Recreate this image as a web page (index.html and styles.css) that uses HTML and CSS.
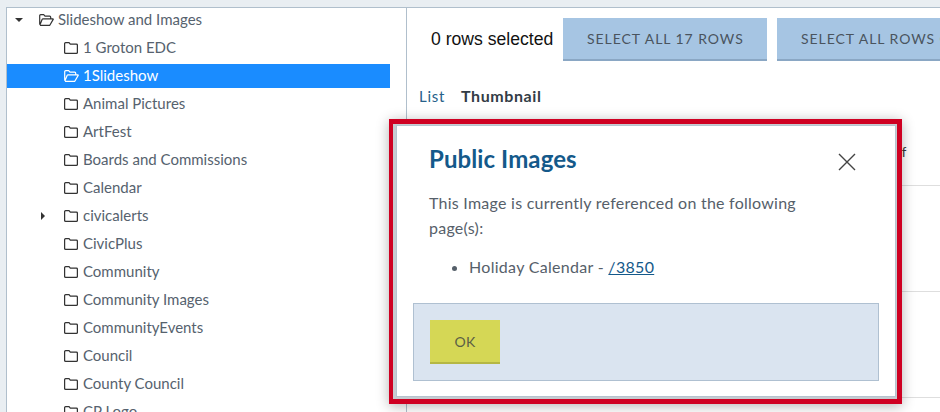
FILE: index.html
```html
<!DOCTYPE html>
<html lang="en">
<head>
<meta charset="utf-8">
<title>Public Images</title>
<link rel="stylesheet" href="styles.css">
</head>
<body>
<svg class="defs" width="0" height="0" aria-hidden="true">
  <symbol id="folder" viewBox="0 0 14 12"><path d="M1.6 .7H5L6.3 2.2H12.4A1 1 0 0 1 13.4 3.2V10.3A1 1 0 0 1 12.4 11.3H1.6A1 1 0 0 1 .6 10.3V1.7A1 1 0 0 1 1.6 .7Z" fill="none" stroke="currentColor" stroke-width="1.25"/></symbol>
  <symbol id="folder-open" viewBox="0 0 15 12"><path d="M.7 10.6V1.7A1 1 0 0 1 1.7 .7H4.7L6 2.2H10.7A1 1 0 0 1 11.7 3.2V4.8M.9 11.3H10.8L14.2 5.4A.4.4 0 0 0 13.9 4.8H4A1 1 0 0 0 3.2 5.3L.9 10.9" fill="none" stroke="currentColor" stroke-width="1.2" stroke-linejoin="round"/></symbol>
</svg>
<div class="shell">
  <aside class="tree">
    <div class="row root"><span class="caret caret-down"></span><svg class="ico-open"><use href="#folder-open"/></svg><span class="label">Slideshow and Images</span></div>
    <div class="row"><svg class="ico"><use href="#folder"/></svg><span class="label">1 Groton EDC</span></div>
    <div class="row selected"><svg class="ico-open"><use href="#folder-open"/></svg><span class="label">1Slideshow</span></div>
    <div class="row"><svg class="ico"><use href="#folder"/></svg><span class="label">Animal Pictures</span></div>
    <div class="row"><svg class="ico"><use href="#folder"/></svg><span class="label">ArtFest</span></div>
    <div class="row"><svg class="ico"><use href="#folder"/></svg><span class="label">Boards and Commissions</span></div>
    <div class="row"><svg class="ico"><use href="#folder"/></svg><span class="label">Calendar</span></div>
    <div class="row has-caret"><span class="caret caret-right"></span><svg class="ico"><use href="#folder"/></svg><span class="label">civicalerts</span></div>
    <div class="row"><svg class="ico"><use href="#folder"/></svg><span class="label">CivicPlus</span></div>
    <div class="row"><svg class="ico"><use href="#folder"/></svg><span class="label">Community</span></div>
    <div class="row"><svg class="ico"><use href="#folder"/></svg><span class="label">Community Images</span></div>
    <div class="row"><svg class="ico"><use href="#folder"/></svg><span class="label">CommunityEvents</span></div>
    <div class="row"><svg class="ico"><use href="#folder"/></svg><span class="label">Council</span></div>
    <div class="row"><svg class="ico"><use href="#folder"/></svg><span class="label">County Council</span></div>
    <div class="row"><svg class="ico"><use href="#folder"/></svg><span class="label">CP Logo</span></div>
  </aside>
  <main class="content">
    <div class="toolbar">
      <span class="count">0 rows selected</span>
      <button class="btn-blue">Select all 17 rows</button>
      <button class="btn-blue">Select all rows on page</button>
    </div>
    <div class="views"><span class="view-link">List</span><strong>Thumbnail</strong></div>
    <div class="grid-row first"><span class="cut">ef</span></div>
    <div class="grid-row"></div>
    <div class="grid-row"></div>
  </main>
</div>
<div class="annotation">
  <section class="modal">
    <header class="modal-head">
      <h2>Public Images</h2>
      <svg class="close" viewBox="0 0 18 18"><path d="M1 1L17 17M17 1L1 17" stroke="currentColor" stroke-width="1.4" fill="none"/></svg>
    </header>
    <p>This Image is currently referenced on the following page(s):</p>
    <ul><li>Holiday Calendar - <a href="#">/3850</a></li></ul>
    <footer class="modal-foot"><button class="btn-ok">OK</button></footer>
  </section>
</div>
</body>
</html>
```
FILE: styles.css
```css
* { box-sizing: border-box; }
html, body { margin: 0; height: 100%; overflow: hidden; }
body {
  background: #e9eef2;
  padding: 7px 0 0 6px;
  font-family: "Lato", "Open Sans", sans-serif;
  font-size: 15px;
  color: #3f4a55;
  position: relative;
}
.defs { position: absolute; }
.shell {
  display: flex;
  height: 440px;
  background: #fff;
  border-top: 1px solid #b0bfcc;
  border-left: 1px solid #b0bfcc;
}
.tree { width: 400px; flex: none; border-right: 1px solid #b0bfcc; padding: 0 16px 0 0; overflow: hidden; }
.row {
  height: 24px;
  margin: 0 0 4px;
  padding-left: 57px;
  display: flex;
  align-items: center;
  white-space: nowrap;
  color: #56626e;
}
.label { margin-top: -2px; }
.root { padding-left: 0; }
.root .caret { margin: 0 0 0 8px; }
.root .ico-open { margin-left: 16px; }
.has-caret { padding-left: 34px; }
.has-caret .ico { margin-left: 19px; }
.selected { background: #1a8cff; color: #fff; }
.ico { width: 14px; height: 12px; margin-right: 5px; color: #333; flex: none; }
.ico-open { width: 15px; height: 12px; margin-right: 4px; color: #333; flex: none; }
.selected .ico-open { color: #fff; }
.caret { width: 0; height: 0; flex: none; }
.caret-down { border: 4px solid transparent; border-top: 4px solid #333; border-bottom: 0; width: 8px; }
.caret-right { border: 4px solid transparent; border-left: 4px solid #333; border-right: 0; }
.content { flex: 1; min-width: 0; overflow: hidden; }
.toolbar { display: flex; align-items: center; gap: 10px; padding: 10px 0 0 24px; white-space: nowrap; }
.count { font: 17.6px "Liberation Sans", sans-serif; color: #111; width: 122px; }
button { font-family: inherit; border: 0; cursor: pointer; }
.btn-blue {
  flex: none;
  height: 43px;
  padding: 0 24px;
  background: #a6c5e3;
  border-bottom: 2px solid #8aa7c4;
  color: #4a545e;
  font-size: 14px;
  letter-spacing: .95px;
  text-transform: uppercase;
}
.btn-blue:first-of-type { width: 204px; }
.views { display: flex; gap: 16px; padding: 25px 0 0 12px; line-height: 20px; }
.view-link { color: #27618a; letter-spacing: .7px; }
.views strong { color: #333c46; font-size: 16px; letter-spacing: .6px; }
.grid-row { height: 106px; border-bottom: 1px solid #dedede; }
.first { height: 80px; position: relative; }
.cut { position: absolute; left: 488px; top: 38px; font-size: 13px; color: #333; }
.annotation {
  position: absolute;
  left: 389px;
  top: 119px;
  width: 513px;
  height: 285px;
  border: 5px solid #cf0022;
  border-left-width: 4px;
  box-shadow: 0 2px 12px rgba(0,0,0,.3);
  background: #c6cbd0;
  padding: 1px 1px 2px 3px;
}
.modal { height: 100%; background: #fff; border: 1px solid #b6c3cf; padding: 0 16px 16px; color: #56606a; }
.modal-head { display: flex; justify-content: space-between; align-items: center; padding: 16px 17px 0 16px; height: 49px; }
h2 { margin: 0; font-size: 24px; font-weight: 700; color: #14598a; letter-spacing: .1px; }
.close { width: 18px; height: 18px; color: #444; margin: 6px 6px 0 0; }
p { margin: 15px 60px 0 16px; line-height: 25px; font-size: 16px; letter-spacing: .25px; }
ul { margin: 15px 0 0; padding: 0 0 0 56px; font-size: 16px; letter-spacing: .3px; line-height: 24px; }
a { color: #14598a; }
.modal-foot { margin-top: 24px; height: 78px; background: #dae4f0; border: 1px solid #afc0d1; padding: 16px; }
.btn-ok {
  display: block;
  width: 70px;
  height: 44px;
  background: #d5d755;
  border-bottom: 2px solid #b5b744;
  color: #5a6045;
  font-size: 14px;
  letter-spacing: .2px;
}
```
